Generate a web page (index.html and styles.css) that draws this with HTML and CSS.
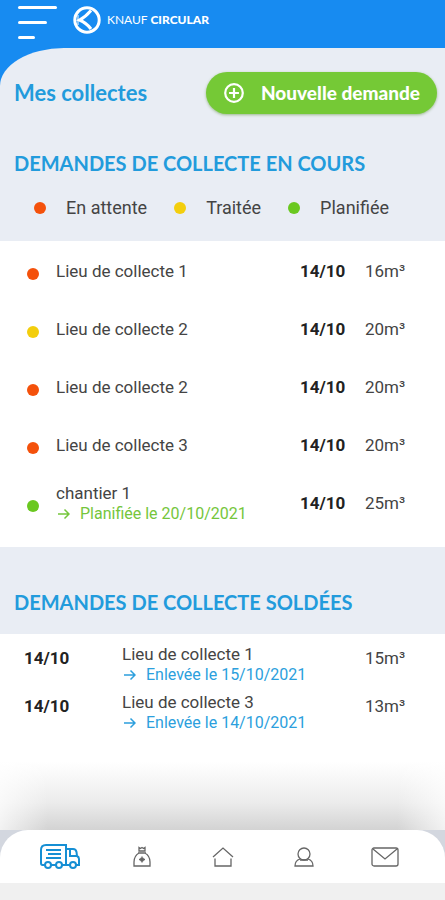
FILE: index.html
```html
<!DOCTYPE html>
<html lang="fr">
<head>
<meta charset="utf-8">
<meta name="viewport" content="width=device-width, initial-scale=1">
<title>Mes collectes</title>
<link rel="stylesheet" href="styles.css">
</head>
<body>
<header class="topbar">
  <button class="menu" type="button" aria-label="Menu"><span class="bar"></span><span class="bar bar-mid"></span><span class="bar bar-short"></span></button>
  <a class="brand" href="#">
    <svg class="brand-mark" viewBox="0 0 28 28" fill="none" stroke="#fff" aria-hidden="true">
      <circle cx="14" cy="14" r="12.200" stroke-width="3"/>
      <path d="M18 4.500C15 8 11.500 11.500 6.500 14C11.500 16 15 19 18 23" stroke-width="3"/>
      <path d="M5 9V19" stroke-width="1"/>
    </svg>
    <span>KNAUF <strong>CIRCULAR</strong></span>
  </a>
</header>
<main class="page">
  <div class="page-head">
    <h1>Mes collectes</h1>
    <button class="new" type="button">
      <svg class="plus" viewBox="0 0 20 20" fill="none" stroke="#fff" stroke-width="2" aria-hidden="true"><circle cx="10" cy="10" r="8"/><path d="M10 5.500V14.500M5.500 10H14.500"/></svg>
      <span>Nouvelle demande</span>
    </button>
  </div>
  <section>
    <h2>DEMANDES DE COLLECTE EN COURS</h2>
    <ul class="legend">
      <li><i class="dot red"></i>En attente</li>
      <li><i class="dot yellow"></i>Traitée</li>
      <li><i class="dot green"></i>Planifiée</li>
    </ul>
    <ul class="list current">
      <li><i class="dot red"></i><div>Lieu de collecte 1</div><b>14/10</b><span>16m³</span></li>
      <li><i class="dot yellow"></i><div>Lieu de collecte 2</div><b>14/10</b><span>20m³</span></li>
      <li><i class="dot red"></i><div>Lieu de collecte 2</div><b>14/10</b><span>20m³</span></li>
      <li><i class="dot red"></i><div>Lieu de collecte 3</div><b>14/10</b><span>20m³</span></li>
      <li><i class="dot green"></i><div>chantier 1<p class="status planned"><svg class="arrow" viewBox="0 0 12 12" aria-hidden="true"><path d="M0 6H11M6.500 1.500L11 6L6.500 10.500"/></svg>Planifiée le 20/10/2021</p></div><b>14/10</b><span>25m³</span></li>
    </ul>
  </section>
  <section class="closed">
    <h2>DEMANDES DE COLLECTE SOLDÉES</h2>
    <ul class="list past">
      <li><b>14/10</b><div>Lieu de collecte 1<p class="status removed"><svg class="arrow" viewBox="0 0 12 12" aria-hidden="true"><path d="M0 6H11M6.500 1.500L11 6L6.500 10.500"/></svg>Enlevée le 15/10/2021</p></div><span>15m³</span></li>
      <li><b>14/10</b><div>Lieu de collecte 3<p class="status removed"><svg class="arrow" viewBox="0 0 12 12" aria-hidden="true"><path d="M0 6H11M6.500 1.500L11 6L6.500 10.500"/></svg>Enlevée le 14/10/2021</p></div><span>13m³</span></li>
    </ul>
  </section>
</main>
<div class="dock">
  <nav class="tabs" aria-label="Navigation principale">
    <a class="active" href="#" aria-label="Collectes">
      <svg width="42" height="26" viewBox="1 1 42 26"><path d="M6 22H3.500Q2 22 2 20V7Q2 2 7 2H27V22H23M17 22H12M27 6H34Q37 6 37.500 9L38 13Q40 14 40 16V22H37M31 22H27M31 6V13H38M7 7H22M9 11H22M7 15H22"/><circle cx="9" cy="22" r="3"/><circle cx="20" cy="22" r="3"/><circle cx="34" cy="22" r="3"/></svg>
    </a>
    <a href="#" aria-label="Sacs">
      <svg width="18" height="22" viewBox="0 0 18 22"><path d="M6 1.500L7.500 2.500L9 1.500L10.500 2.500L12 1.500V5H6ZM5 7H13M6 7Q1 10 1 16V20H17V16Q17 10 12 7M9 10.500V16.500M6 13.500H12M7.500 12L10.500 15M10.500 12L7.500 15"/></svg>
    </a>
    <a href="#" aria-label="Accueil">
      <svg width="22" height="22" viewBox="0 0 22 22"><path d="M1 11L11 2L21 11M3 12.500V20H19V12.500"/></svg>
    </a>
    <a href="#" aria-label="Profil">
      <svg width="20" height="22" viewBox="0 0 20 22"><circle cx="10" cy="8" r="6"/><path d="M6 13Q1 14.500 1 20H19Q19 14.500 14 13M6 14H14"/></svg>
    </a>
    <a href="#" aria-label="Messages">
      <svg width="28" height="20" viewBox="0 0 28 20"><rect x="1" y="1" width="26" height="18" rx="2"/><path d="M2 2L14 12L26 2"/></svg>
    </a>
  </nav>
</div>
</body>
</html>
```
FILE: styles.css
```css
* { box-sizing: border-box; }
body {
  margin: 0;
  min-height: 100vh;
  display: flex;
  flex-direction: column;
  background: #178bf1;
  color: #444;
  font: 17px/20px Roboto, sans-serif;
}
h1, h2, p, ul { margin: 0; padding: 0; }
ul { list-style: none; }
a { color: inherit; text-decoration: none; }
button { border: 0; font: inherit; cursor: pointer; }
h1, h2 {
  padding: 0 14px;
  color: #229bdc;
  font: bold 20px/24px Lato, sans-serif;
}
h1 { padding-right: 0; font-size: 22px; }
.topbar {
  display: flex;
  align-items: flex-start;
  gap: 16px;
  height: 48px;
  padding: 6px 18px 0;
}
.menu {
  display: flex;
  flex-direction: column;
  gap: 12px;
  width: 39px;
  padding: 0;
  background: none;
}
.bar { width: 39px; height: 3px; border-radius: 2px; background: #fff; }
.bar-mid { width: 29px; }
.bar-short { width: 17px; }
.brand {
  display: flex;
  align-items: center;
  gap: 6px;
  color: #fff;
  font: 400 12px/28px Lato, sans-serif;
}
.brand strong { font-weight: 900; }
.brand-mark { width: 28px; height: 28px; }
.page {
  flex: 1;
  display: flex;
  flex-direction: column;
  border-top-left-radius: 64px 38px;
  background: #e9edf4;
}
.page-head {
  display: flex;
  align-items: center;
  justify-content: space-between;
  padding: 24px 8px 37px 0;
}
.new {
  display: flex;
  align-items: center;
  gap: 16px;
  height: 42px;
  padding: 0 17px;
  border-radius: 21px;
  background: #75c936;
  box-shadow: 0 1px 3px #9bb98c;
  color: #fff;
  font: 900 19px/24px Lato, sans-serif;
}
.plus { width: 22px; height: 22px; }
.legend {
  display: flex;
  gap: 27px;
  padding: 23px 34px;
  font-size: 18px;
}
.legend li { display: flex; align-items: center; gap: 20px; }
.dot { width: 12px; height: 12px; border-radius: 50%; }
.red { background: #f4510b; }
.yellow { background: #f3ce0d; }
.green { background: #6ac820; }
.list { background: #fff; }
.list li { display: grid; align-items: center; }
.list b { color: #222; }
.current { padding: 1px 0 15px; }
.current li {
  grid-template-columns: 29px 1fr 65px 80px;
  height: 58px;
  padding-left: 27px;
}
.current .dot { margin-top: 6px; }
.closed { flex: 1; display: flex; flex-direction: column; padding-top: 43px; }
.past {
  flex: 1;
  margin-top: 20px;
  padding: 10px 0 64px;
  background:
    linear-gradient(to right, rgba(255, 255, 255, .7), transparent 48px, transparent calc(100% - 48px), rgba(255, 255, 255, .7)),
    linear-gradient(to top, #d3d3d3, #ececec 28px, #fff 68px);
}
.past li {
  grid-template-columns: 98px 1fr 80px;
  align-items: start;
  height: 48px;
  padding-left: 24px;
}
.past b, .past span { line-height: 28px; }
.status { display: flex; align-items: center; gap: 10px; padding: 1px 0 0 2px; font-size: 16px; }
.planned { color: #75c63c; }
.removed { color: #2c9fdd; }
.arrow { width: 12px; height: 12px; fill: none; stroke: currentColor; stroke-width: 1.5; }
.dock { padding-bottom: 17px; background: linear-gradient(#d3d7df 50%, #f0f0f0 50%); }
.tabs {
  display: flex;
  align-items: center;
  height: 53px;
  padding: 0 20px;
  border-radius: 28px 28px 0 0;
  background: #fff;
}
.tabs a { flex: 1; display: flex; justify-content: center; }
.tabs svg { fill: none; stroke: #666; stroke-width: 1.3; }
.tabs .active svg { stroke: #168fd4; stroke-width: 2; }
```
